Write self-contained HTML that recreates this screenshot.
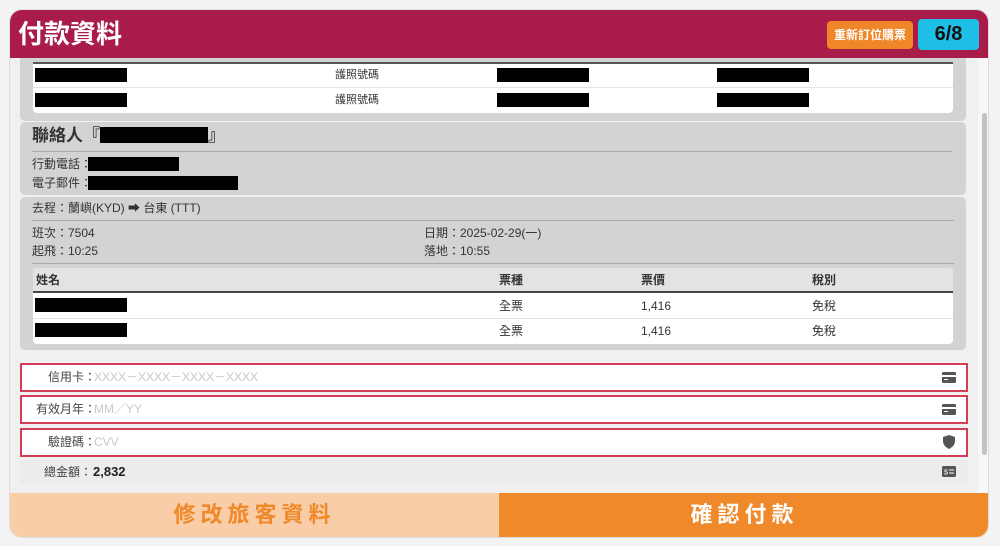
<!DOCTYPE html>
<html><head><meta charset="utf-8"><style>
*{box-sizing:border-box;margin:0;padding:0}
body{width:1000px;height:546px;background:#f3f3f3;font-family:"Liberation Sans","Noto Sans CJK TC",sans-serif;position:relative;overflow:hidden;color:#333;font-size:12px;line-height:14px}
.abs{position:absolute}
.card{left:9px;top:9px;width:980px;height:529px;border-radius:13px;background:#f0f0f0;overflow:hidden;border:1px solid #ddd}
.hdr{left:0;top:0;width:980px;height:48px;background:#a91b48}
.blk{position:absolute;background:#000;height:14px}
.sec{position:absolute;left:10px;width:946px;background:#d3d3d3;border-radius:5px}
.t{position:absolute;white-space:nowrap;line-height:14px}
.inp{position:absolute;left:10px;width:948px;height:29px;border:2px solid #d33e57;background:#fff}
.inp .l{position:absolute;right:870px;top:5px;font-size:12px;color:#444;line-height:14px}
.inp .p{position:absolute;left:72px;top:5px;color:#c8c8c8;font-size:12px;line-height:14px}
</style></head><body>
<div class="abs card">
 <!-- scrollbar -->
 <div class="abs" style="left:968px;top:48px;width:12px;height:435px;background:#f7f7f7"></div>
 <div class="abs" style="left:972px;top:103px;width:5px;height:342px;background:#c2c2c2;border-radius:3px"></div>
 <!-- sec1 -->
 <div class="sec" style="top:40px;height:71px"></div>
 <div class="abs" style="left:23px;top:52px;width:920px;height:51px;background:#fff;border-top:2px solid #555;border-radius:0 0 4px 4px"></div>
 <div class="abs" style="left:23px;top:77px;width:920px;height:1px;background:#e4e4e4"></div>
 <div class="blk" style="left:25px;top:58px;width:92px"></div><div class="blk" style="left:487px;top:58px;width:92px"></div><div class="blk" style="left:707px;top:58px;width:92px"></div>
 <div class="blk" style="left:25px;top:83px;width:92px"></div><div class="blk" style="left:487px;top:83px;width:92px"></div><div class="blk" style="left:707px;top:83px;width:92px"></div>
 <div class="t" style="left:325px;top:58px;font-size:11px">護照號碼</div>
 <div class="t" style="left:325px;top:83px;font-size:11px">護照號碼</div>
 <div class="abs hdr"></div>
 <div class="t" style="left:8px;top:9px;color:#fff;font-size:26px;font-weight:bold;line-height:30px">付款資料</div>
 <div class="abs" style="left:817px;top:11px;width:86px;height:28px;background:#ef8628;border-radius:4px;color:#fff;font-weight:bold;font-size:12px;text-align:center;line-height:28px">重新訂位購票</div>
 <div class="abs" style="left:908px;top:9px;width:61px;height:31px;background:#1ebfe6;border-radius:4px;color:#111;font-weight:bold;font-size:20px;text-align:center;line-height:31px">6/8</div>
 <!-- sec2 -->
 <div class="sec" style="top:112px;height:73px"></div>
 <div class="t" style="left:22px;top:117px;font-size:17px;font-weight:bold;line-height:18px">聯絡人『<span style="display:inline-block;width:108px;height:16px;background:#000;vertical-align:-2px"></span>』</div>
 <div class="abs" style="left:22px;top:141px;width:920px;height:1px;background:#aaa"></div>
 <div class="t" style="left:22px;top:147px">行動電話：</div><div class="blk" style="left:78px;top:147px;width:91px"></div>
 <div class="t" style="left:22px;top:166px">電子郵件：</div><div class="blk" style="left:78px;top:166px;width:150px"></div>
 <!-- sec3 -->
 <div class="sec" style="top:187px;height:153px"></div>
 <div class="t" style="left:22px;top:191px">去程：蘭嶼(KYD) ➡ 台東 (TTT)</div>
 <div class="abs" style="left:22px;top:210px;width:922px;height:1px;background:#aaa"></div>
 <div class="t" style="left:22px;top:216px">班次：7504</div><div class="t" style="left:414px;top:216px">日期：2025-02-29(一)</div>
 <div class="t" style="left:22px;top:234px">起飛：10:25</div><div class="t" style="left:414px;top:234px">落地：10:55</div>
 <div class="abs" style="left:22px;top:253px;width:922px;height:1px;background:#aaa"></div>
 <div class="abs" style="left:23px;top:258px;width:920px;height:76px;background:#fff;border-radius:4px;overflow:hidden">
  <div class="abs" style="left:0;top:0;width:920px;height:25px;background:#e3e3e4;border-bottom:2px solid #444"></div>
  <div class="abs" style="left:0;top:50px;width:920px;height:1px;background:#e4e4e4"></div>
 </div>
 <div class="t" style="left:26px;top:263px;font-weight:bold">姓名</div><div class="t" style="left:489px;top:263px;font-weight:bold">票種</div><div class="t" style="left:631px;top:263px;font-weight:bold">票價</div><div class="t" style="left:802px;top:263px;font-weight:bold">稅別</div>
 <div class="blk" style="left:25px;top:288px;width:92px"></div><div class="t" style="left:489px;top:289px">全票</div><div class="t" style="left:631px;top:289px">1,416</div><div class="t" style="left:802px;top:289px">免稅</div>
 <div class="blk" style="left:25px;top:313px;width:92px"></div><div class="t" style="left:489px;top:314px">全票</div><div class="t" style="left:631px;top:314px">1,416</div><div class="t" style="left:802px;top:314px">免稅</div>
 <!-- inputs -->
 <div class="inp" style="top:353px"><span class="l">信用卡：</span><span class="p">XXXX－XXXX－XXXX－XXXX</span>
  <svg class="abs" style="left:920px;top:7px" width="14" height="11" viewBox="0 0 14 11"><rect x="0" y="0" width="14" height="11" rx="1.5" fill="#555"/><rect x="0" y="3" width="14" height="2" fill="#fff"/><rect x="2" y="7" width="4" height="1" fill="#fff"/></svg></div>
 <div class="inp" style="top:385px"><span class="l">有效月年：</span><span class="p">MM／YY</span>
  <svg class="abs" style="left:920px;top:7px" width="14" height="11" viewBox="0 0 14 11"><rect x="0" y="0" width="14" height="11" rx="1.5" fill="#555"/><rect x="0" y="3" width="14" height="2" fill="#fff"/><rect x="2" y="7" width="4" height="1" fill="#fff"/></svg></div>
 <div class="inp" style="top:418px"><span class="l">驗證碼：</span><span class="p">CVV</span>
  <svg class="abs" style="left:921px;top:5px" width="12" height="14" viewBox="0 0 12 14"><path d="M6 0 L12 2 V6 C12 10 9 12.5 6 14 C3 12.5 0 10 0 6 V2 Z" fill="#555"/></svg></div>
 <div class="abs" style="left:10px;top:450px;width:948px;height:25px;background:#ececec;border-radius:3px"></div>
 <div class="t" style="left:34px;top:455px;color:#444">總金額：</div><div class="t" style="left:83px;top:455px;font-weight:bold;font-size:13px;color:#222">2,832</div>
 <svg class="abs" style="left:932px;top:456px" width="14" height="11" viewBox="0 0 14 11"><rect width="14" height="11" rx="1.5" fill="#555"/><text x="2" y="8.5" font-size="7" fill="#fff" font-family="Liberation Sans">$</text><rect x="7" y="3.5" width="5" height="1" fill="#fff"/><rect x="7" y="6.5" width="5" height="1" fill="#fff"/></svg>
 <!-- buttons -->
 <div class="abs" style="left:0;top:483px;width:489px;height:46px;background:#f8cda8;color:#f0892a;font-size:22px;font-weight:bold;text-align:center;line-height:44px;letter-spacing:5px">修改旅客資料</div>
 <div class="abs" style="left:489px;top:483px;width:491px;height:46px;background:#f0892a;color:#fff;font-size:22px;font-weight:bold;text-align:center;line-height:44px;letter-spacing:5px">確認付款</div>
</div>
</body></html>
